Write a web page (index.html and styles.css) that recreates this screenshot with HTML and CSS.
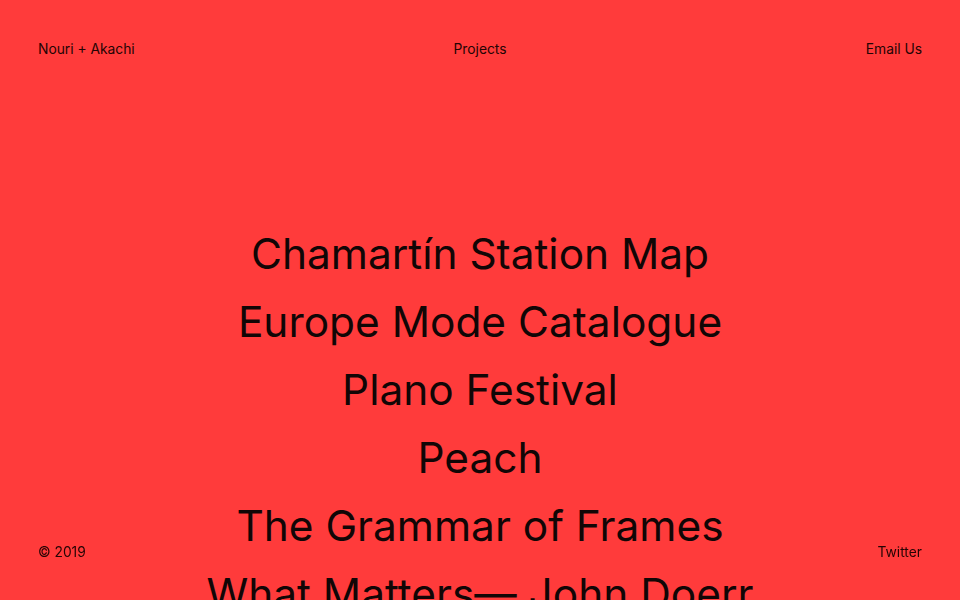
FILE: index.html
```html
<!DOCTYPE html>
<html lang="en">
<head>
<meta charset="utf-8">
<title>Nouri + Akachi</title>
<link rel="stylesheet" href="styles.css">
</head>
<body>
<header class="site-header">
  <a class="nav-link nav-left" href="#">Nouri + Akachi</a>
  <a class="nav-link nav-center" href="#">Projects</a>
  <a class="nav-link nav-right" href="#">Email Us</a>
</header>
<main class="projects">
  <ul class="project-list">
    <li><a href="#">Chamartín Station Map</a></li>
    <li><a href="#">Europe Mode Catalogue</a></li>
    <li><a href="#">Plano Festival</a></li>
    <li><a href="#">Peach</a></li>
    <li><a href="#">The Grammar of Frames</a></li>
    <li><a href="#">What Matters— John Doerr</a></li>
    <li><a href="#">Atlas of Small Rooms</a></li>
  </ul>
</main>
<footer class="site-footer">
  <span class="nav-link">© 2019</span>
  <a class="nav-link" href="#">Twitter</a>
</footer>
</body>
</html>
```

FILE: styles.css
```css
html, body {
  margin: 0;
  padding: 0;
}
body {
  background: #ff3b3b;
  color: #110606;
  font-family: Inter, "Noto Sans", "Liberation Sans", sans-serif;
  min-height: 100vh;
}
a {
  color: inherit;
  text-decoration: none;
}
.site-header {
  display: grid;
  grid-template-columns: 1fr auto 1fr;
  align-items: center;
  padding: 39px 38px 0;
}
.nav-left {
  justify-self: start;
}
.nav-center {
  justify-self: center;
}
.nav-right {
  justify-self: end;
}
.nav-link {
  font-size: 13.8px;
  line-height: 20px;
  color: #240404;
}
.projects {
  padding-top: 161px;
}
.project-list {
  list-style: none;
  margin: 0;
  padding: 0;
  text-align: center;
}
.project-list li {
  font-size: 42.4px;
  line-height: 68px;
}
.site-footer {
  position: fixed;
  left: 0;
  right: 0;
  bottom: 0;
  display: flex;
  justify-content: space-between;
  padding: 0 38px 38px;
}
```
